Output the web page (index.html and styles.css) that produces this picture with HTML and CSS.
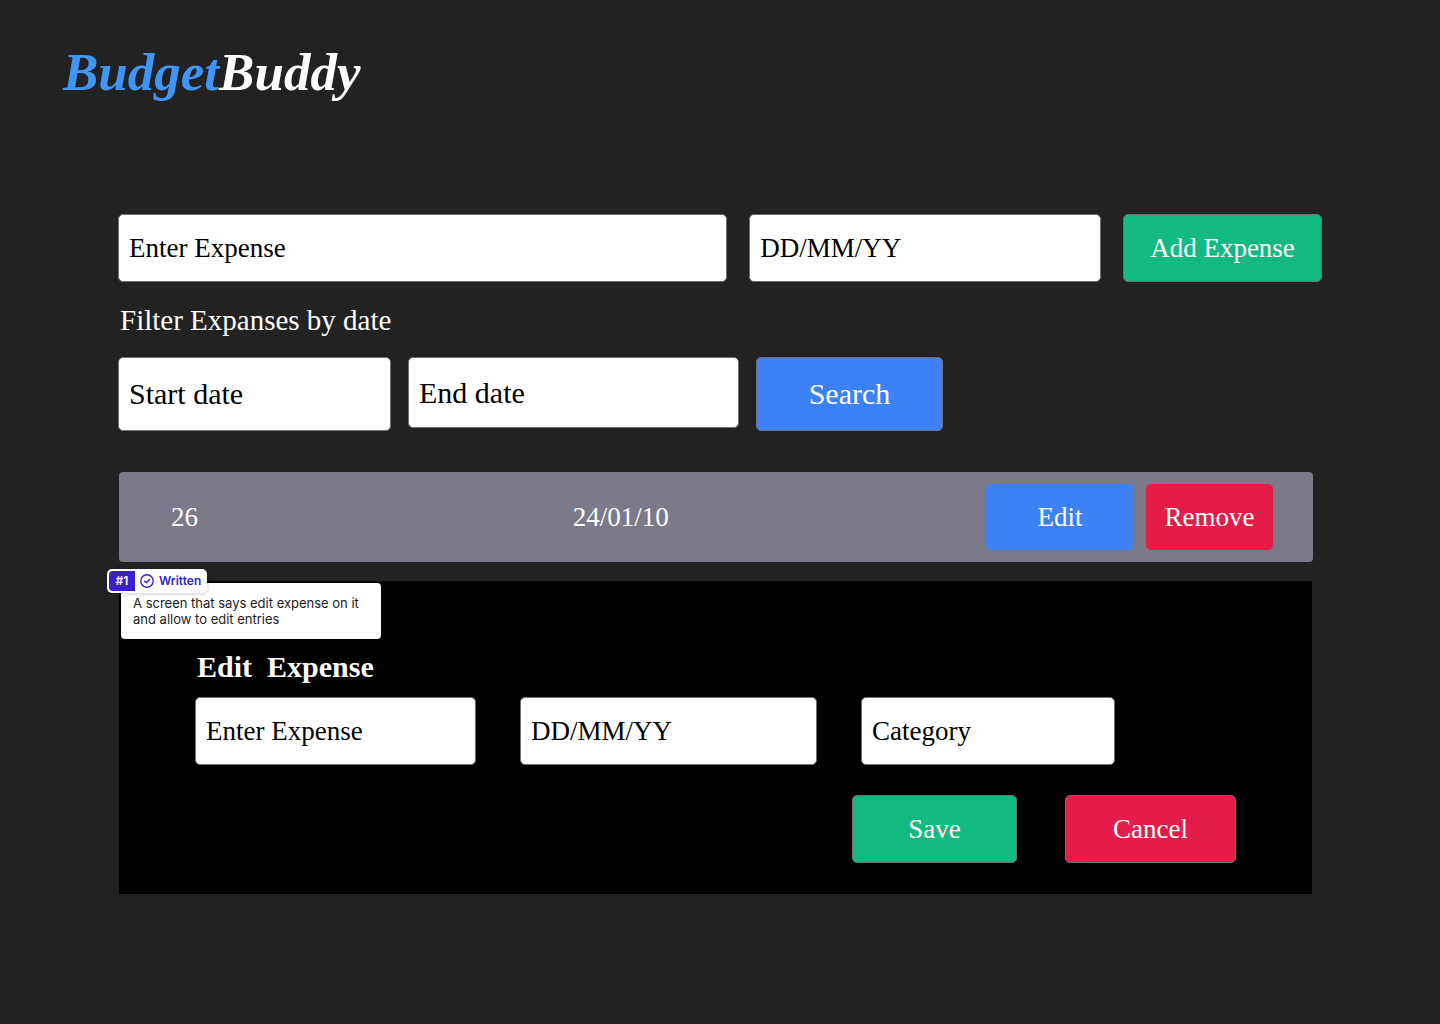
FILE: index.html
```html
<!DOCTYPE html>
<html lang="en">
<head>
  <meta charset="utf-8">
  <meta name="viewport" content="width=device-width, initial-scale=1">
  <title>BudgetBuddy</title>
  <link rel="stylesheet" href="styles.css">
</head>
<body>
  <header class="header">
    <h1 class="logo"><span class="logo-accent">Budget</span>Buddy</h1>
  </header>

  <main class="content">
    <form class="add-form">
      <input class="field" type="text" placeholder="Enter Expense" aria-label="Expense">
      <input class="field" type="text" placeholder="DD/MM/YY" aria-label="Date">
      <button class="button button-green" type="button">Add Expense</button>
    </form>

    <h2 class="filter-title">Filter Expanses by date</h2>
    <form class="filter-form">
      <input class="field" type="text" placeholder="Start date" aria-label="Start date">
      <input class="field filter-end" type="text" placeholder="End date" aria-label="End date">
      <button class="button button-blue" type="button">Search</button>
    </form>

    <table class="expenses">
      <tbody>
        <tr>
          <td class="amount">26</td>
          <td class="date">24/01/10</td>
          <td class="row-actions">
            <div class="row-buttons">
              <button class="button button-blue plain edit-button" type="button">Edit</button>
              <button class="button button-red plain remove-button" type="button">Remove</button>
            </div>
          </td>
        </tr>
      </tbody>
    </table>

    <section class="editor">
      <aside class="note">
        <div class="note-badge">
          <span class="note-number">#1</span>
          <svg class="note-icon" viewBox="0 0 16 16" aria-hidden="true">
            <circle cx="8" cy="8" r="6.2"/>
            <path d="M5.6 8.2 7.3 9.8 10.5 6.4"/>
          </svg>
          <span class="note-status">Written</span>
        </div>
        <p class="note-text">A screen that says edit expense on it<br>and allow to edit entries</p>
      </aside>

      <h2 class="editor-title">Edit  Expense</h2>
      <form>
        <div class="editor-fields">
          <input class="field" type="text" placeholder="Enter Expense" aria-label="Edited expense">
          <input class="field" type="text" placeholder="DD/MM/YY" aria-label="Edited date">
          <input class="field" type="text" placeholder="Category" aria-label="Category">
        </div>
        <div class="editor-actions">
          <button class="button button-green save-button" type="button">Save</button>
          <button class="button button-red cancel-button" type="button">Cancel</button>
        </div>
      </form>
    </section>
  </main>
</body>
</html>
```
FILE: styles.css
```css
* {
  box-sizing: border-box;
}

body {
  margin: 0;
  min-height: 100vh;
  background: #222222;
  color: #ffffff;
  font-family: "Liberation Serif", serif;
  font-size: 27px;
}

h1, h2, p {
  margin: 0;
}

.header {
  padding: 40px 63px 0;
}

.logo {
  font-size: 53px;
  line-height: 64px;
  font-style: italic;
  font-weight: 700;
}

.logo-accent {
  color: #4096f7;
}

.content {
  padding: 110px 118px 64px;
}

/* Controls */

.field,
.button {
  height: 68px;
  border: 1px solid #716f7c;
  border-radius: 5px;
  font-family: inherit;
  font-size: 27px;
  line-height: 32px;
}

.field {
  width: 100%;
  min-width: 0;
  padding: 0 10px;
  background: #ffffff;
  color: #000000;
}

.field::placeholder {
  color: #000000;
  opacity: 1;
}

.button {
  padding: 0;
  color: #ffffff;
  cursor: pointer;
}

.button-green {
  background: #12b981;
}

.button-blue {
  background: #3c82f6;
}

.button-red {
  background: #e31d48;
}

.plain {
  height: 66px;
  border: 0;
}

/* Add expense */

.add-form {
  display: grid;
  grid-template-columns: 610fr 352fr 199px;
  gap: 22px;
}

/* Filter */

.filter-title {
  margin-top: 20px;
  padding-left: 2px;
  font-size: 29px;
  line-height: 36px;
  font-weight: 400;
}

.filter-form {
  display: grid;
  grid-template-columns: 273fr 331fr 187px;
  align-items: start;
  gap: 17px;
  max-width: 825px;
  margin-top: 19px;
}

.filter-form .field,
.filter-form .button {
  height: 74px;
  font-size: 30px;
}

.filter-form .filter-end {
  height: 71px;
}

/* Expense list */

.expenses {
  width: calc(100% - 10px);
  height: 90px;
  margin: 41px 0 0 1px;
  border-spacing: 0;
  border-radius: 4px;
  background: #7c7a88;
}

.expenses td {
  padding: 0;
}

.expenses .amount {
  width: 38%;
  padding-left: 52px;
}

.expenses .row-actions {
  padding-right: 40px;
}

.row-buttons {
  display: flex;
  justify-content: flex-end;
  gap: 12px;
}

.edit-button {
  width: 148px;
}

.remove-button {
  width: 127px;
}

/* Edit panel */

.editor {
  position: relative;
  margin: 19px 10px 0 1px;
  padding: 68px 76px 31px;
  background: #000000;
}

.editor-title {
  padding-left: 2px;
  font-size: 30px;
  line-height: 36px;
  font-weight: 700;
  white-space: pre;
}

.editor-fields {
  display: grid;
  grid-template-columns: 281fr 297fr 254fr;
  gap: 44px;
  margin-top: 12px;
  padding-right: 121px;
}

.editor-actions {
  display: flex;
  justify-content: flex-end;
  gap: 48px;
  margin-top: 30px;
}

.save-button {
  width: 165px;
}

.cancel-button {
  width: 171px;
}

/* Review note pinned to the panel corner */

.note {
  position: absolute;
  top: 2px;
  left: 2px;
  width: 260px;
  padding: 12px;
  border-radius: 4px;
  background: #ffffff;
  color: #1c1c1c;
  font-family: Inter, sans-serif;
}

.note-text {
  font-size: 13px;
  line-height: 16px;
}

.note-badge {
  position: absolute;
  top: -14px;
  left: -14px;
  display: flex;
  align-items: center;
  width: 100px;
  height: 24px;
  padding: 2px;
  border-radius: 5px;
  background: #ffffff;
  box-shadow: 0 1px 4px rgba(0, 0, 0, 0.2);
  color: #3a1fd1;
  font-size: 12px;
  line-height: 20px;
  font-weight: 600;
}

.note-number {
  width: 26px;
  border-radius: 4px 0 0 4px;
  background: #3a1fd1;
  color: #ffffff;
  text-align: center;
}

.note-icon {
  width: 16px;
  height: 16px;
  margin: 0 4px;
  fill: none;
  stroke: currentColor;
  stroke-width: 1.4;
  stroke-linecap: round;
  stroke-linejoin: round;
}
```
